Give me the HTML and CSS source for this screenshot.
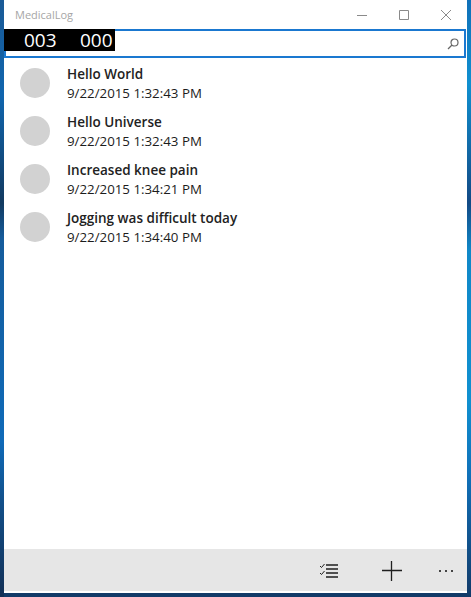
FILE: index.html
```html
<!DOCTYPE html>
<html lang="en">
<head>
    <meta charset="UTF-8">
    <meta name="viewport" content="width=device-width, initial-scale=1.0">
    <title>MedicalLog</title>
    <link rel="stylesheet" href="styles.css">
</head>
<body>
    <div class="window">
        <div class="titlebar">
            <span class="app-title">MedicalLog</span>
            <div class="window-buttons">
                <svg class="win-icon" width="12" height="12" viewBox="0 0 12 12"><path d="M1 6.5h10" /></svg>
                <svg class="win-icon" width="12" height="12" viewBox="0 0 12 12"><path d="M1.5 1.5h9v9h-9z" /></svg>
                <svg class="win-icon" width="12" height="12" viewBox="0 0 12 12"><path d="M1 1l10 10M11 1L1 11" /></svg>
            </div>
        </div>

        <div class="search-box">
            <svg class="search-icon" width="12" height="12" viewBox="0 0 12 12"><circle cx="7.5" cy="4.5" r="3.5" /><path d="M5 7l-4 4" /></svg>
        </div>
        <div class="frame-counter"><span>003</span><span>000</span></div>

        <ul class="log-list">
            <li class="log-item">
                <div class="avatar"></div>
                <div class="log-text">
                    <div class="log-title">Hello World</div>
                    <div class="log-date">9/22/2015 1:32:43 PM</div>
                </div>
            </li>
            <li class="log-item">
                <div class="avatar"></div>
                <div class="log-text">
                    <div class="log-title">Hello Universe</div>
                    <div class="log-date">9/22/2015 1:32:43 PM</div>
                </div>
            </li>
            <li class="log-item">
                <div class="avatar"></div>
                <div class="log-text">
                    <div class="log-title">Increased knee pain</div>
                    <div class="log-date">9/22/2015 1:34:21 PM</div>
                </div>
            </li>
            <li class="log-item">
                <div class="avatar"></div>
                <div class="log-text">
                    <div class="log-title">Jogging was difficult today</div>
                    <div class="log-date">9/22/2015 1:34:40 PM</div>
                </div>
            </li>
        </ul>

        <div class="app-bar">
            <svg class="bar-icon" width="20" height="16" viewBox="0 0 20 16">
                <path class="check" d="M1 3l1.5 1.5 3-3.5M1 10l1.5 1.5 3-3.5" />
                <path d="M7 2h12M7 6h12M7 10h12M7 14h12" />
            </svg>
            <svg class="bar-icon add-icon" width="20" height="20" viewBox="0 0 20 20"><path d="M0 9.5h20M9.5 0v20" /></svg>
            <div class="more"><span></span><span></span><span></span></div>
        </div>
    </div>
</body>
</html>
```

FILE: styles.css
```css
html, body {
    height: 100%;
}
body {
    margin: 0;
    padding: 0 4px 4px 4px;
    box-sizing: border-box;
    background-color: #123a68;
    /* Desktop wallpaper showing around the window edges */
    background-image:
        linear-gradient(180deg, #1a5a96 0%, #1065ae 16%, #123a60 34%, #155c9c 40%, #0f6ab8 74%, #12508a 84%, #122f55 100%),
        linear-gradient(180deg, #1070b8 0%, #1090d0 14%, #124a85 34%, #1088c8 42%, #1090d0 67%, #1070b8 80%, #123a68 100%);
    background-size: 4px 100%, 4px 100%;
    background-position: left top, right top;
    background-repeat: no-repeat;
    font-family: "Open Sans", "Noto Sans", sans-serif;
    overflow: hidden;
}
.window {
    position: relative;
    display: flex;
    flex-direction: column;
    height: 100%;
    background: #ffffff;
}
.titlebar {
    display: flex;
    align-items: center;
    justify-content: space-between;
    height: 29px;
    flex-shrink: 0;
}
.app-title {
    padding-left: 11px;
    font-size: 11px;
    color: #a6a6a6;
}
.window-buttons {
    display: flex;
    gap: 30px;
    padding-right: 15px;
}
.win-icon path {
    fill: none;
    stroke: #8a8a8a;
    stroke-width: 1;
}
.search-box {
    display: flex;
    align-items: center;
    justify-content: flex-end;
    height: 29px;
    box-sizing: border-box;
    flex-shrink: 0;
    margin-right: 1px;
    padding-right: 5px;
    border: 2px solid #1a78d0;
}
.search-icon * {
    fill: none;
    stroke: #666666;
    stroke-width: 1.2;
}
/* Frame counter overlay on top of the search box */
.frame-counter {
    position: absolute;
    left: 0;
    top: 29px;
    display: flex;
    gap: 23.4px;
    width: 111px;
    height: 22px;
    box-sizing: border-box;
    padding-left: 20px;
    background: #000000;
    color: #ffffff;
    font-size: 19px;
    line-height: 22px;
}
.log-list {
    flex: 1;
    margin: 0;
    padding: 1px 0 0 0;
    list-style: none;
}
.log-item {
    display: flex;
    align-items: center;
    gap: 17px;
    height: 48px;
    padding-left: 16px;
}
.avatar {
    width: 30px;
    height: 30px;
    border-radius: 50%;
    background: #d2d2d2;
}
.log-text {
    padding-top: 1px;
}
.log-title {
    font-size: 13.5px;
    font-weight: 600;
    line-height: 18px;
    color: #222222;
}
.log-date {
    font-size: 13.3px;
    line-height: 20px;
    color: #1c1c1c;
}
.app-bar {
    display: flex;
    align-items: center;
    justify-content: flex-end;
    height: 42px;
    box-sizing: border-box;
    flex-shrink: 0;
    padding: 2px 14px 0 0;
    margin-bottom: 2px;
    background: #e6e6e6;
}
.bar-icon path {
    fill: none;
    stroke: #1f1f1f;
    stroke-width: 1.3;
}
.bar-icon path.check {
    stroke-width: 1;
}
.add-icon {
    margin: 0 37px 0 43px;
}
.more {
    display: flex;
    gap: 4px;
}
.more span {
    width: 2px;
    height: 2px;
    background: #444444;
}
```
